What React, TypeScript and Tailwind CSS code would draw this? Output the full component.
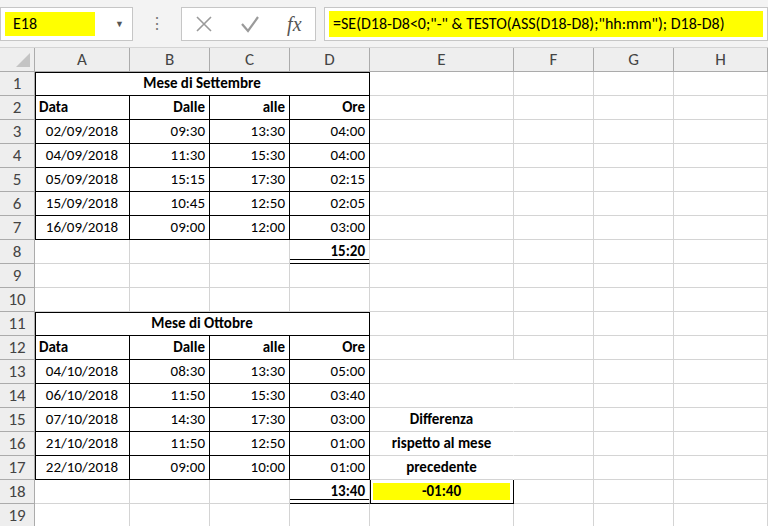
import React from "react";

const cols = ["A", "B", "C", "D", "E", "F", "G", "H"];
const font = { fontFamily: "Carlito, Lato, 'Open Sans', sans-serif" };

type C = { t?: string; cls?: string; span?: number };

const sep: string[][] = [
  ["02/09/2018", "09:30", "13:30", "04:00"],
  ["04/09/2018", "11:30", "15:30", "04:00"],
  ["05/09/2018", "15:15", "17:30", "02:15"],
  ["15/09/2018", "10:45", "12:50", "02:05"],
  ["16/09/2018", "09:00", "12:00", "03:00"],
];
const ott: string[][] = [
  ["04/10/2018", "08:30", "13:30", "05:00"],
  ["06/10/2018", "11:50", "15:30", "03:40"],
  ["07/10/2018", "14:30", "17:30", "03:00"],
  ["21/10/2018", "11:50", "12:50", "01:00"],
  ["22/10/2018", "09:00", "10:00", "01:00"],
];

const B = "border-black";
const empty = (n: number): C[] => Array.from({ length: n }, () => ({}));

function block(title: string, data: string[][], total: string, extra?: (i: number) => C): C[][] {
  const rows: C[][] = [];
  rows.push([{ t: title, span: 4, cls: `${B} font-bold text-center shadow-[inset_1px_1px_0_#000]` }, ...empty(4)]);
  rows.push([
    { t: "Data", cls: `${B} font-bold shadow-[inset_1px_0_0_#000]` },
    { t: "Dalle", cls: `${B} font-bold text-right` },
    { t: "alle", cls: `${B} font-bold text-right` },
    { t: "Ore", cls: `${B} font-bold text-right` },
    ...empty(4),
  ]);
  data.forEach((r, i) => {
    rows.push([
      { t: r[0], cls: `${B} text-center shadow-[inset_1px_0_0_#000]` },
      { t: r[1], cls: `${B} text-right` },
      { t: r[2], cls: `${B} text-right` },
      { t: r[3], cls: `${B} text-right` },
      extra ? extra(i) : {},
      ...empty(3),
    ]);
  });
  rows.push([
    {}, {}, {},
    { t: total, cls: "border-b-black font-bold text-right shadow-[inset_0_-3px_0_#fff,inset_0_-4px_0_#000]" },
    extra ? extra(99) : {},
    ...empty(3),
  ]);
  return rows;
}

const eText = ["", "", "Differenza", "rispetto al mese", "precedente"];
const sheet: C[][] = [
  ...block("Mese di Settembre", sep, "15:20"),
  empty(8),
  empty(8),
  ...block("Mese di Ottobre", ott, "13:40", (i) =>
    i === 99
      ? { t: "-01:40", cls: "border-black font-bold text-center bg-[#ffff00] shadow-[inset_1px_0_0_#000,inset_0_0_0_3px_#fff]" }
      : { t: eText[i], cls: "font-bold text-center border-r-white" }
  ),
  empty(8),
];

export default function App() {
  return (
    <div className="w-[768px] h-[526px] overflow-hidden bg-white text-[15px] text-black" style={font}>
      <div className="h-[48px] bg-[#f3f3f3] flex items-center gap-2 border-b border-[#d4d4d4]">
        <div className="w-[133px] h-[34px] bg-white border border-[#c6c6c6] flex items-center pl-1 pr-2">
          <div className="w-[90px] h-[24px] bg-[#ffff00] flex items-center pl-2 text-[16px]">E18</div>
          <div className="flex-1" />
          <span className="text-[9px] text-[#555]">▼</span>
        </div>
        <span className="text-[#777] text-[16px] mx-2">⋮</span>
        <div className="w-[135px] h-[34px] bg-white border border-[#c6c6c6] flex items-center justify-around">
          <svg width="18" height="18" viewBox="0 0 18 18"><path d="M2 2 L16 16 M16 2 L2 16" stroke="#9a9a9a" strokeWidth="1.6" /></svg>
          <svg width="20" height="18" viewBox="0 0 20 18"><path d="M2 9 L8 16 L18 2" stroke="#9a9a9a" strokeWidth="2.2" fill="none" /></svg>
          <span className="italic text-[#555] text-[20px]" style={{ fontFamily: "'Liberation Serif', serif" }}>fx</span>
        </div>
        <div className="flex-1 h-[34px] bg-white border border-[#c6c6c6] flex items-center px-1">
          <div className="h-[26px] flex-1 bg-[#ffff00] flex items-center pl-1 text-[16px] whitespace-nowrap">
            =SE(D18-D8&lt;0;"-" &amp; TESTO(ASS(D18-D8);"hh:mm"); D18-D8)
          </div>
        </div>
      </div>
      <div className="grid grid-cols-[35px_95px_80px_80px_80px_144px_80px_80px_94px] auto-rows-[24px]">
        <div className="bg-[#eeeeee] border-r border-b border-[#ababab] relative">
          <div className="absolute right-1 bottom-1 w-0 h-0 border-l-[14px] border-l-transparent border-b-[14px] border-b-[#c4c4c4]" />
        </div>
        {cols.map((c) => (
          <div key={c} className="bg-[#eeeeee] border-r border-b border-[#ababab] flex items-center justify-center text-[17px] text-[#444]">{c}</div>
        ))}
        {sheet.map((row, r) => (
          <React.Fragment key={r}>
            <div className="bg-[#eeeeee] border-r border-b border-[#ababab] flex items-center justify-center text-[17px] text-[#444]">{r + 1}</div>
            {row.map((c, i) => (
              <div
                key={i}
                className={`border-r border-b border-[#d4d4d4] px-1 leading-[23px] whitespace-nowrap ${c.span === 4 ? "col-span-4" : ""} ${c.cls || ""}`}
              >
                {c.t}
              </div>
            ))}
          </React.Fragment>
        ))}
      </div>
    </div>
  );
}
